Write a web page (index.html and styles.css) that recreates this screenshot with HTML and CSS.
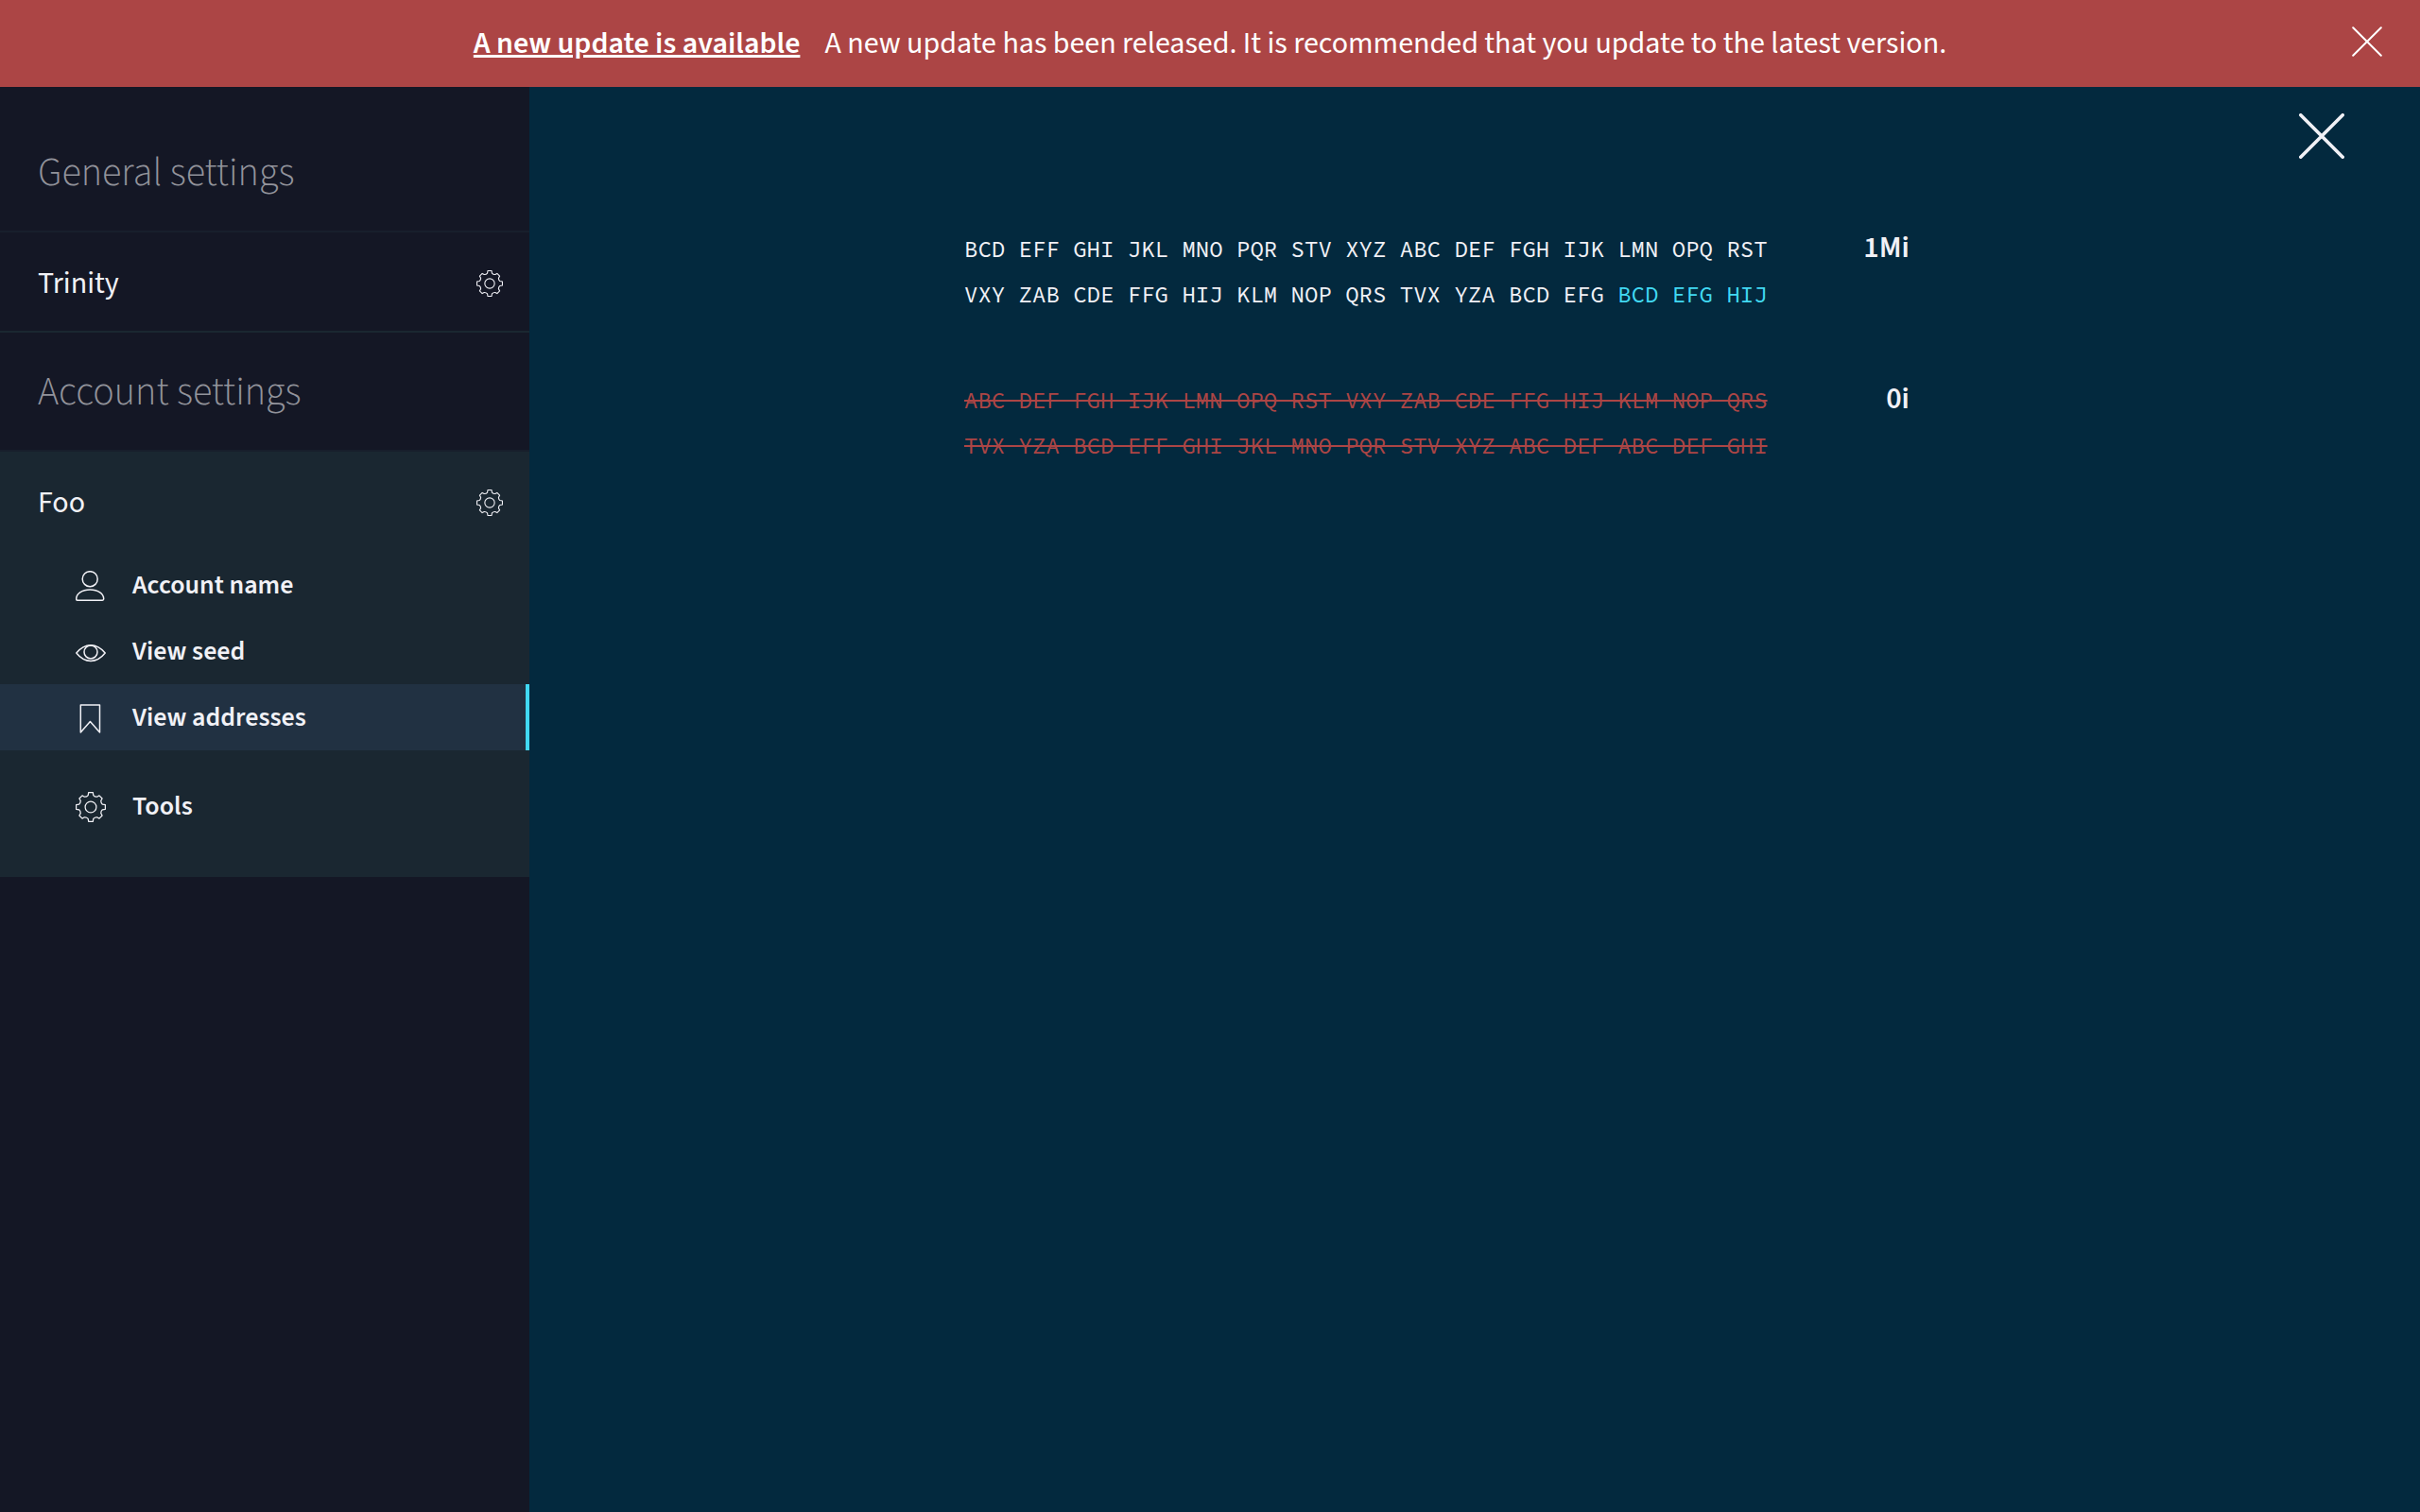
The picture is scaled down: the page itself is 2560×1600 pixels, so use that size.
FILE: index.html
```html
<!DOCTYPE html>
<html lang="en">
<head>
<meta charset="utf-8">
<title>Trinity settings</title>
<link rel="stylesheet" href="styles.css">
</head>
<body>
<svg class="defs" aria-hidden="true">
  <symbol id="gear" viewBox="0 0 32 32">
    <path d="M13.7.6H18.3L18.8 3.6Q20.3 5.4 22.6 5.2L25 3.9 28.1 7 26.8 9.4Q26.6 11.7 28.4 13.2L31.4 13.7V18.3L28.4 18.8Q26.6 20.3 26.8 22.6L28.1 25 25 28.1 22.6 26.8Q20.3 26.6 18.8 28.4L18.3 31.4H13.7L13.2 28.4Q11.7 26.6 9.4 26.8L7 28.1 3.9 25 5.2 22.6Q5.4 20.3 3.6 18.8L.6 18.3V13.7L3.6 13.2Q5.4 11.7 5.2 9.4L3.9 7 7 3.9 9.4 5.2Q11.7 5.4 13.2 3.6Z"/>
    <circle cx="16" cy="16" r="5.9"/>
  </symbol>
  <symbol id="cross" viewBox="0 0 48 48">
    <path d="M1.8 1.8L46.2 46.2M46.2 1.8L1.8 46.2"/>
  </symbol>
</svg>

<header class="update">
  <p class="update-text"><a class="update-link">A new update is available</a>A new update has been released. It is recommended that you update to the latest version.</p>
  <svg class="update-close"><use href="#cross"/></svg>
</header>

<div class="settings">
  <nav class="sidebar">
    <h2 class="heading heading-first">General settings</h2>
    <div class="entry"><span>Trinity</span><svg class="entry-icon"><use href="#gear"/></svg></div>
    <h2 class="heading">Account settings</h2>
    <section class="account">
      <div class="entry"><span>Foo</span><svg class="entry-icon"><use href="#gear"/></svg></div>
      <ul class="menu">
        <li class="menu-item">
          <svg class="menu-icon bold" viewBox="0 0 32 32"><circle cx="15.2" cy="8.7" r="8"/><path d="M2 31.2Q.7 31.2.7 29.8C.7 24.5 6.5 20 15.2 20S29.7 24.5 29.7 29.8Q29.7 31.2 28.4 31.2Z"/></svg>
          Account name
        </li>
        <li class="menu-item">
          <svg class="menu-icon bold" viewBox="0 0 32 32"><path d="M.8 17Q7.5 8.7 16 8.7T31.2 17Q24.5 25.4 16 25.4T.8 17Z"/><circle cx="16" cy="15.9" r="7"/></svg>
          View seed
        </li>
        <li class="menu-item active">
          <svg class="menu-icon bold" viewBox="0 0 32 32"><path d="M5.3 2.1H25.5V31L15.4 19.6 5.3 31Z"/></svg>
          View addresses
        </li>
        <li class="menu-item tools">
          <svg class="menu-icon"><use href="#gear"/></svg>
          Tools
        </li>
      </ul>
    </section>
  </nav>

  <main class="content">
    <svg class="content-close"><use href="#cross"/></svg>
    <ul class="addresses">
      <li class="address">
        <p class="hash">BCD EFF GHI JKL MNO PQR STV XYZ ABC DEF FGH IJK LMN OPQ RST<br>VXY ZAB CDE FFG HIJ KLM NOP QRS TVX YZA BCD EFG <mark class="checksum">BCD EFG HIJ</mark></p>
        <strong class="balance">1Mi</strong>
      </li>
      <li class="address">
        <p class="hash spent">ABC DEF FGH IJK LMN OPQ RST VXY ZAB CDE FFG HIJ KLM NOP QRS<br>TVX YZA BCD EFF GHI JKL MNO PQR STV XYZ ABC DEF ABC DEF GHI</p>
        <strong class="balance">0i</strong>
      </li>
    </ul>
  </main>
</div>
</body>
</html>
```
FILE: styles.css
```css
* {
  box-sizing: border-box;
  margin: 0;
  padding: 0;
}

body {
  display: flex;
  flex-direction: column;
  height: 100vh;
  overflow: hidden;
  background: #03293e;
  color: #f1f1f6;
  font-family: "Source Sans 3", "Noto Sans CJK SC", sans-serif;
  font-size: 32px;
  line-height: 40px;
}

ul {
  list-style: none;
}

svg {
  display: block;
  flex: none;
  fill: none;
  stroke: currentColor;
  stroke-width: 1.25;
  stroke-linejoin: round;
  stroke-linecap: round;
}

.defs {
  position: absolute;
  width: 0;
  height: 0;
}

.update {
  display: flex;
  align-items: center;
  flex: none;
  height: 92px;
  padding: 0 40px 0 72px;
  background: #ac4545;
  color: #fff;
}

.update-text {
  flex: 1;
  text-align: center;
}

.update-link {
  margin-right: 26px;
  font-weight: 600;
  text-decoration: underline;
}

.update-close {
  width: 32px;
  height: 32px;
  margin-top: -4px;
  stroke-width: 3;
}

.settings {
  display: flex;
  flex: 1;
}

.sidebar {
  width: 560px;
  background: #141725;
}

.heading {
  height: 126px;
  padding: 38px 40px 0;
  border-bottom: 2px solid #181f2c;
  color: #92939b;
  font-size: 42px;
  font-weight: 300;
  line-height: 50px;
}

.heading-first {
  height: 154px;
  padding-top: 66px;
}

.entry {
  display: flex;
  align-items: center;
  justify-content: space-between;
  height: 106px;
  padding: 4px 28px 0 40px;
  border-bottom: 2px solid #1a2731;
}

.entry-icon {
  width: 28px;
  height: 28px;
}

.account {
  height: 450px;
  background: #1a2731;
}

.menu-item {
  display: flex;
  align-items: center;
  gap: 28px;
  height: 70px;
  padding-left: 80px;
  font-size: 28px;
  font-weight: 600;
}

.menu-icon {
  position: relative;
  top: 1px;
  width: 32px;
  height: 32px;
}

.bold {
  stroke-width: 1.5;
}

.active {
  border-right: 4px solid #41d9f3;
  background: #213142;
}

.tools {
  margin-top: 24px;
}

.content {
  flex: 1;
  padding: 28px 80px 0 460px;
}

.content-close {
  width: 48px;
  height: 48px;
  margin-left: auto;
  stroke-width: 3.6;
}

.addresses {
  display: flex;
  flex-direction: column;
  gap: 64px;
  width: 1000px;
  margin-top: 72px;
}

.address {
  display: flex;
  justify-content: space-between;
}

.hash {
  font-family: "Source Code Pro", "Noto Sans Mono", monospace;
  font-size: 24px;
  line-height: 48px;
}

.checksum {
  background: none;
  color: #41d9f3;
}

.spent {
  color: #ac4545;
  text-decoration: line-through;
}

.balance {
  font-weight: 600;
  line-height: 44px;
}
```
